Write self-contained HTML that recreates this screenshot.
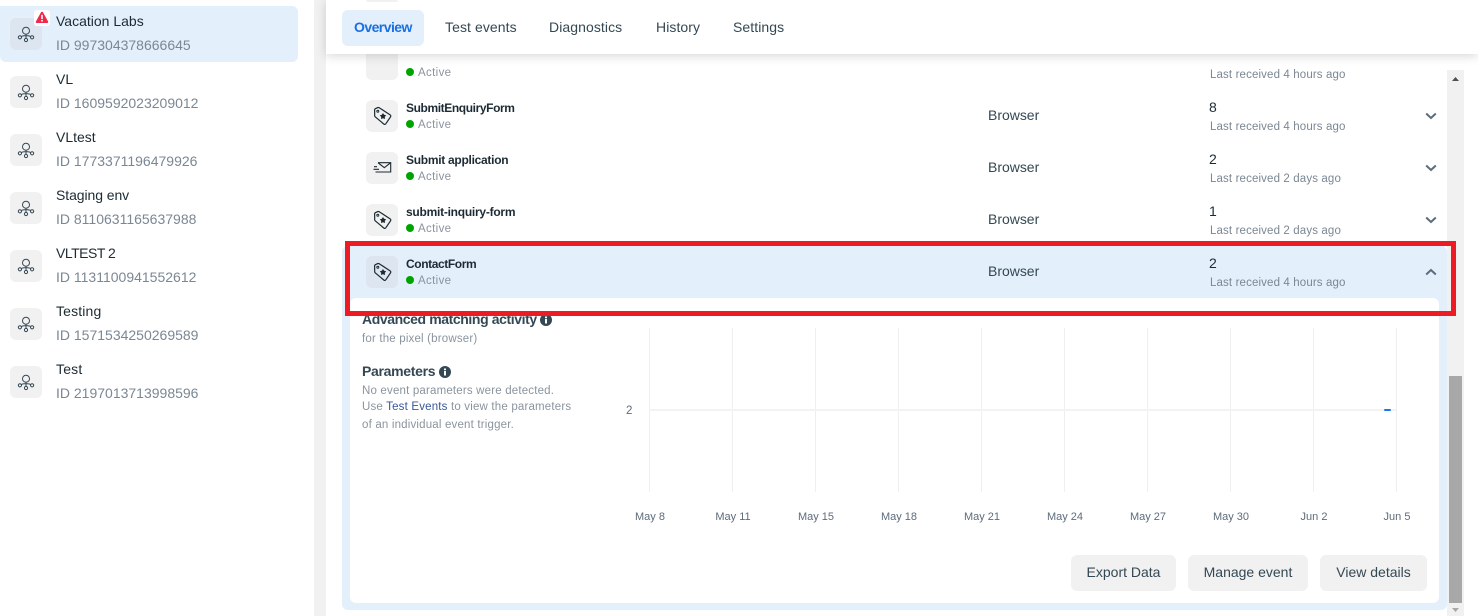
<!DOCTYPE html>
<html><head><meta charset="utf-8"><style>
html,body{margin:0;padding:0;width:1478px;height:616px;overflow:hidden;background:#fff;font-family:"Liberation Sans",sans-serif;color:#1c2b33}
.a{position:absolute;white-space:nowrap}
.ic{position:absolute;width:32px;height:32px;border-radius:6px;background:#f1f1f1}
.ic svg{position:absolute;left:0;top:0;width:32px;height:32px;fill:none;stroke:#344854;stroke-width:1}
.nm{font-size:14px;line-height:18px;color:#1c2b33}
.id{font-size:14px;line-height:18px;color:#7b8793}
.ev{font-size:12px;line-height:16px;font-weight:bold;color:#1c2b33;letter-spacing:-.4px}
.ac{font-size:11.5px;line-height:14px;color:#8a949e;letter-spacing:.35px}
.dot{position:absolute;width:8px;height:8px;border-radius:50%;background:#00a400}
.br{font-size:14px;line-height:18px;color:#344854;letter-spacing:-.02px}
.ct{font-size:14px;line-height:18px;color:#1c2b33}
.lr{font-size:11.5px;line-height:14px;color:#7b8793;letter-spacing:.13px}
.tab{font-size:14px;line-height:18px;color:#344854;letter-spacing:.08px}
.vl{position:absolute;top:328px;width:1px;height:164px;background:#eeeff0}
.xl{position:absolute;top:511px;width:60px;text-align:center;font-size:11px;line-height:13px;color:#5d6c7b}
.btn{position:absolute;top:555px;height:36px;line-height:34px;background:#f1f1f1;border-radius:6px;text-align:center;font-size:14px;color:#344854}
.small{font-size:11.5px;line-height:14px;color:#8a949e;letter-spacing:.18px}
</style></head><body>
<svg width="0" height="0" style="position:absolute"><defs>
<symbol id="px" viewBox="0 0 32 32"><circle cx="16" cy="12.700" r="3.500"/><path d="M16 16.200v4.200M16 17.600c-2 0-3.500.1-4.700 1M16 17.600c2 0 3.500.1 4.700 1"/><circle cx="16" cy="22" r="1.600"/><circle cx="9.900" cy="19.300" r="1.600"/><circle cx="22.100" cy="19.300" r="1.600"/></symbol>
<symbol id="tag" viewBox="0 0 32 32"><path d="M8.600 9.800c.1-.5.300-.8.800-1.100l2.300-1.100c.5-.2 1-.2 1.500.1l10.900 7.200c.8.500.9 1.300.4 2l-4.600 6.800c-.5.700-1.300.9-2 .4L9.500 17.100c-.4-.3-.7-.7-.8-1.200z" stroke="#1c2b33" stroke-width="1.200" fill="none"/><circle cx="11.800" cy="11.200" r="1" stroke="#1c2b33" fill="none"/><path d="M17 13l1.100 1.800 2.100.5-1.400 1.600.2 2.100-2-.8-2 .8.200-2.100-1.400-1.600 2.100-.5z" fill="#1c2b33" stroke="none"/></symbol>
<symbol id="env" viewBox="0 0 32 32"><path d="M12 10.700h12.700V20H14M12 10.700l6.300 5 6.400-5M8 14.700h3M7.500 17.300h5.500M9.500 20H14" stroke="#1c2b33" stroke-width="1.100" fill="none"/></symbol>
</defs></svg>

<!-- sidebar -->
<div class="a" style="left:0;top:6px;width:298px;height:56px;background:#e4effc;border-radius:0 6px 6px 6px"></div>
<div class="a" style="left:314px;top:0;width:12px;height:616px;background:#f1f1f1"></div>

<div class="ic" style="left:10px;top:18px;background:#dce5f0"><svg><use href="#px"/></svg></div>
<div class="a" style="left:34px;top:10px;width:16px;height:16px;background:#fff;border-radius:3px"></div>
<svg class="a" style="left:35px;top:11px" width="14" height="13" viewBox="0 0 14 13"><path d="M7 .8c.5 0 .9.3 1.100.7l5 9c.4.7-.1 1.500-.9 1.500H1.800c-.8 0-1.300-.8-.9-1.500l5-9c.2-.4.600-.7 1.100-.7z" fill="#f02849"/><rect x="6.200" y="3.800" width="1.600" height="4.200" fill="#fff"/><rect x="6.200" y="8.900" width="1.600" height="1.600" fill="#fff"/></svg>
<div class="a nm" style="left:56px;top:12px">Vacation Labs</div>
<div class="a id" style="left:56px;top:36px">ID 997304378666645</div>

<div class="ic" style="left:10px;top:76px"><svg><use href="#px"/></svg></div>
<div class="a nm" style="left:56px;top:70px">VL</div>
<div class="a id" style="left:56px;top:94px">ID 1609592023209012</div>

<div class="ic" style="left:10px;top:134px"><svg><use href="#px"/></svg></div>
<div class="a nm" style="left:56px;top:128px">VLtest</div>
<div class="a id" style="left:56px;top:152px">ID 1773371196479926</div>

<div class="ic" style="left:10px;top:192px"><svg><use href="#px"/></svg></div>
<div class="a nm" style="left:56px;top:186px;letter-spacing:-.08px">Staging env</div>
<div class="a id" style="left:56px;top:210px">ID 8110631165637988</div>

<div class="ic" style="left:10px;top:250px"><svg><use href="#px"/></svg></div>
<div class="a nm" style="left:56px;top:244px;letter-spacing:-.5px">VLTEST 2</div>
<div class="a id" style="left:56px;top:268px">ID 1131100941552612</div>

<div class="ic" style="left:10px;top:308px"><svg><use href="#px"/></svg></div>
<div class="a nm" style="left:56px;top:302px;letter-spacing:.15px">Testing</div>
<div class="a id" style="left:56px;top:326px">ID 1571534250269589</div>

<div class="ic" style="left:10px;top:366px"><svg><use href="#px"/></svg></div>
<div class="a nm" style="left:56px;top:360px;letter-spacing:.2px">Test</div>
<div class="a id" style="left:56px;top:384px">ID 2197013713998596</div>

<!-- scrollbar -->
<div class="a" style="left:1447px;top:70px;width:17px;height:546px;background:#f1f1f1"></div>
<div class="a" style="left:1449px;top:376px;width:13px;height:227px;background:#a8a8a8"></div>
<svg class="a" style="left:1451px;top:76px" width="9" height="6"><path d="M1 5h7L4.500 1z" fill="#505050"/></svg>
<svg class="a" style="left:1451px;top:607px" width="9" height="6"><path d="M1 1h7L4.500 5z" fill="#a8a8a8"/></svg>

<!-- cut row -->
<div class="a" style="left:366px;top:54px;width:32px;height:26px;background:#f1f1f1;border-radius:0 0 6px 6px"></div>
<div class="dot" style="left:406px;top:68px"></div>
<div class="a ac" style="left:418px;top:66px">Active</div>
<div class="a lr" style="left:1210px;top:68px">Last received 4 hours ago</div>

<!-- rows -->
<div class="ic" style="left:366px;top:100px"><svg><use href="#tag"/></svg></div>
<div class="a ev" style="left:406px;top:100px">SubmitEnquiryForm</div>
<div class="dot" style="left:406px;top:120px"></div>
<div class="a ac" style="left:418px;top:118px">Active</div>
<div class="a br" style="left:988px;top:106px">Browser</div>
<div class="a ct" style="left:1209px;top:98px">8</div>
<div class="a lr" style="left:1210px;top:120px">Last received 4 hours ago</div>
<svg class="a" style="left:1425px;top:112px" width="12" height="8"><path d="M1.200 1.500L6 6l4.800-4.500" fill="none" stroke="#5d6c7b" stroke-width="2"/></svg>

<div class="ic" style="left:366px;top:152px"><svg><use href="#env"/></svg></div>
<div class="a ev" style="left:406px;top:152px;letter-spacing:-.28px">Submit application</div>
<div class="dot" style="left:406px;top:172px"></div>
<div class="a ac" style="left:418px;top:170px">Active</div>
<div class="a br" style="left:988px;top:158px">Browser</div>
<div class="a ct" style="left:1209px;top:150px">2</div>
<div class="a lr" style="left:1210px;top:172px">Last received 2 days ago</div>
<svg class="a" style="left:1425px;top:164px" width="12" height="8"><path d="M1.200 1.500L6 6l4.800-4.500" fill="none" stroke="#5d6c7b" stroke-width="2"/></svg>

<div class="ic" style="left:366px;top:204px"><svg><use href="#tag"/></svg></div>
<div class="a ev" style="left:406px;top:204px;letter-spacing:-.25px">submit-inquiry-form</div>
<div class="dot" style="left:406px;top:224px"></div>
<div class="a ac" style="left:418px;top:222px">Active</div>
<div class="a br" style="left:988px;top:210px">Browser</div>
<div class="a ct" style="left:1209px;top:202px">1</div>
<div class="a lr" style="left:1210px;top:224px">Last received 2 days ago</div>
<svg class="a" style="left:1425px;top:216px" width="12" height="8"><path d="M1.200 1.500L6 6l4.800-4.500" fill="none" stroke="#5d6c7b" stroke-width="2"/></svg>

<!-- expanded -->
<div class="a" style="left:342px;top:246px;width:1105px;height:364px;background:#e4effc;border-radius:6px"></div>
<div class="a" style="left:350px;top:298px;width:1089px;height:305px;background:#fff;border-radius:6px"></div>

<div class="ic" style="left:366px;top:256px;background:#dce5f0"><svg><use href="#tag"/></svg></div>
<div class="a ev" style="left:406px;top:256px">ContactForm</div>
<div class="dot" style="left:406px;top:276px"></div>
<div class="a ac" style="left:418px;top:274px">Active</div>
<div class="a br" style="left:988px;top:262px">Browser</div>
<div class="a ct" style="left:1209px;top:254px">2</div>
<div class="a lr" style="left:1210px;top:276px">Last received 4 hours ago</div>
<svg class="a" style="left:1425px;top:268px" width="12" height="8"><path d="M1.200 6.500L6 2l4.800 4.500" fill="none" stroke="#5d6c7b" stroke-width="2"/></svg>

<div class="a" style="left:362px;top:310px;font-size:14px;line-height:18px;font-weight:bold;color:#344854;letter-spacing:-.4px">Advanced matching activity</div>
<svg class="a" style="left:540px;top:314px" width="12" height="12"><circle cx="6" cy="6" r="6" fill="#344854"/><rect x="5" y="5" width="2" height="4.500" fill="#fff"/><rect x="5" y="2.500" width="2" height="1.700" fill="#fff"/></svg>
<div class="a small" style="left:362px;top:332px">for the pixel (browser)</div>

<div class="a" style="left:362px;top:362px;font-size:14px;line-height:18px;font-weight:bold;color:#344854;letter-spacing:-.3px">Parameters</div>
<svg class="a" style="left:439px;top:366px" width="12" height="12"><circle cx="6" cy="6" r="6" fill="#344854"/><rect x="5" y="5" width="2" height="4.500" fill="#fff"/><rect x="5" y="2.500" width="2" height="1.700" fill="#fff"/></svg>
<div class="a small" style="left:362px;top:384px">No event parameters were detected.</div>
<div class="a small" style="left:362px;top:400px">Use <span style="color:#385898">Test Events</span> to view the parameters</div>
<div class="a small" style="left:362px;top:418px">of an individual event trigger.</div>

<!-- chart -->
<div class="vl" style="left:649px"></div><div class="vl" style="left:732px"></div><div class="vl" style="left:815px"></div><div class="vl" style="left:898px"></div><div class="vl" style="left:981px"></div><div class="vl" style="left:1064px"></div><div class="vl" style="left:1147px"></div><div class="vl" style="left:1230px"></div><div class="vl" style="left:1313px"></div><div class="vl" style="left:1396px"></div>
<div class="a" style="left:649px;top:409px;width:747px;height:2px;background:#f2f3f4"></div>
<div class="a" style="left:1384px;top:409px;width:7px;height:2px;background:#1877f2;border-radius:1px"></div>
<div class="a" style="left:626px;top:404px;font-size:11.500px;line-height:14px;color:#5d6c7b">2</div>
<div class="xl" style="left:620px">May 8</div><div class="xl" style="left:703px">May 11</div><div class="xl" style="left:786px">May 15</div><div class="xl" style="left:869px">May 18</div><div class="xl" style="left:952px">May 21</div><div class="xl" style="left:1035px">May 24</div><div class="xl" style="left:1118px">May 27</div><div class="xl" style="left:1201px">May 30</div><div class="xl" style="left:1284px">Jun 2</div><div class="xl" style="left:1367px">Jun 5</div>

<div class="btn" style="left:1071px;width:105px">Export Data</div>
<div class="btn" style="left:1188px;width:120px">Manage event</div>
<div class="btn" style="left:1320px;width:107px">View details</div>

<!-- red annotation -->
<div class="a" style="left:345px;top:241px;width:1101px;height:65px;border:5px solid #ed1c24"></div>

<!-- header -->
<div class="a" style="left:326px;top:0;width:1152px;height:54px;background:#fff;box-shadow:0 2px 10px rgba(0,0,0,.16)"></div>
<div class="a" style="left:366px;top:0;width:32px;height:2px;background:#f1f1f1;border-radius:0 0 6px 6px"></div>
<div class="a" style="left:342px;top:10px;width:82px;height:36px;background:#e4effc;border-radius:6px"></div>
<div class="a tab" style="left:354px;top:18px;font-weight:bold;color:#1b6fe0;letter-spacing:-.55px">Overview</div>
<div class="a tab" style="left:445px;top:18px">Test events</div>
<div class="a tab" style="left:549px;top:18px">Diagnostics</div>
<div class="a tab" style="left:656px;top:18px">History</div>
<div class="a tab" style="left:733px;top:18px">Settings</div>
</body></html>
